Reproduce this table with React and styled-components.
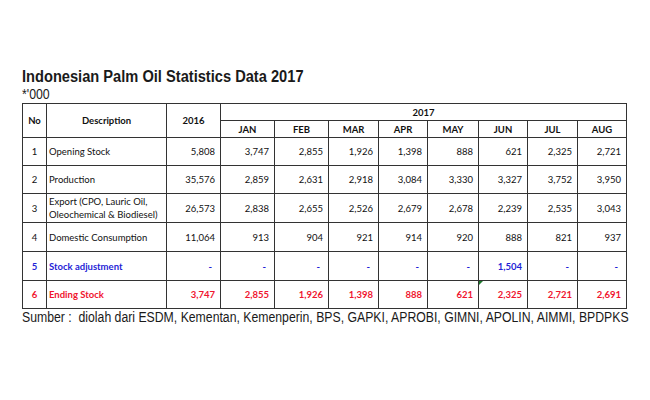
import styled, { createGlobalStyle } from "styled-components";

const months = ["JAN", "FEB", "MAR", "APR", "MAY", "JUN", "JUL", "AUG"];
const widths = [24, 120, 54, 54, 54, 50, 49, 51, 49, 50, 49];

const rows = [
  { no: 1, desc: "Opening Stock", vals: ["5,808", "3,747", "2,855", "1,926", "1,398", "888", "621", "2,325", "2,721"], h: 28 },
  { no: 2, desc: "Production", vals: ["35,576", "2,859", "2,631", "2,918", "3,084", "3,330", "3,327", "3,752", "3,950"], h: 28 },
  { no: 3, desc: "Export (CPO, Lauric Oil,\nOleochemical & Biodiesel)", vals: ["26,573", "2,838", "2,655", "2,526", "2,679", "2,678", "2,239", "2,535", "3,043"], h: 29 },
  { no: 4, desc: "Domestic Consumption", vals: ["11,064", "913", "904", "921", "914", "920", "888", "821", "937"], h: 29 },
  { no: 5, desc: "Stock adjustment", vals: ["-", "-", "-", "-", "-", "-", "1,504", "-", "-"], h: 29, tone: "blue" },
  { no: 6, desc: "Ending Stock", vals: ["3,747", "2,855", "1,926", "1,398", "888", "621", "2,325", "2,721", "2,691"], h: 28, tone: "red" },
];

const tones = { blue: "#1f1fd6", red: "#f0142e" };

const App = () => {
  return (
    <Page>
      <GlobalStyle />
      <Title>Indonesian Palm Oil Statistics Data 2017</Title>
      <Unit>*'000</Unit>
      <Table>
        <colgroup>
          {widths.map((w, i) => (
            <Col key={i} $w={w} />
          ))}
        </colgroup>
        <thead>
          <HeadRow>
            <Th rowSpan={2}>No</Th>
            <Th rowSpan={2}>Description</Th>
            <Th rowSpan={2}>2016</Th>
            <Th colSpan={8}>2017</Th>
          </HeadRow>
          <HeadRow>
            {months.map(m => (
              <Th key={m}>{m}</Th>
            ))}
          </HeadRow>
        </thead>
        <tbody>
          {rows.map(r => (
            <Row key={r.no} $h={r.h} $tone={r.tone}>
              <NoCell>{r.no}</NoCell>
              <DescCell>{r.desc}</DescCell>
              {r.vals.map((v, i) => (
                <NumCell key={i} $dash={v === "-"} $mark={r.no === 6 && i === 6}>
                  {v}
                </NumCell>
              ))}
            </Row>
          ))}
        </tbody>
      </Table>
      <Source>Sumber :  diolah dari ESDM, Kementan, Kemenperin, BPS, GAPKI, APROBI, GIMNI, APOLIN, AIMMI, BPDPKS</Source>
    </Page>
  );
};

export default App;

/* ---------------------------- STYLED COMPONENTS --------------------------- */

const GlobalStyle = createGlobalStyle`
  body {
    margin: 0;
    background: #fff;
  }
`;

const Page = styled.div`
  width: 650px;
  height: 400px;
  padding: 68px 0 0 22px;
  box-sizing: border-box;
  font-family: "Liberation Sans", Arial, sans-serif;
  color: #1a1a1a;
  overflow: hidden;
`;

const Title = styled.div`
  font-size: 16px;
  font-weight: bold;
  line-height: 18px;
  white-space: nowrap;
  transform: scaleX(0.915);
  transform-origin: left center;
`;

const Unit = styled.div`
  font-size: 14px;
  line-height: 17px;
  transform: scaleX(0.88);
  transform-origin: left center;
`;

const Table = styled.table`
  border-collapse: collapse;
  table-layout: fixed;
  width: 604px;
  font-family: Lato, "Open Sans", sans-serif;
  font-size: 9.5px;
  border: 1px solid #222;

  td,
  th {
    border: 1px solid #333;
    padding: 0;
  }
`;

const Col = styled.col`
  width: ${p => p.$w}px;
`;

const HeadRow = styled.tr`
  height: 17px;
`;

const Th = styled.th`
  font-weight: bold;
  text-align: center;
  vertical-align: middle;
  color: #111;
`;

const Row = styled.tr`
  height: ${p => p.$h}px;
  color: ${p => (p.$tone ? tones[p.$tone] : "#111")};
  font-weight: ${p => (p.$tone ? "bold" : "normal")};
`;

const NoCell = styled.td`
  text-align: center;
`;

const DescCell = styled.td`
  text-align: left;
  padding-left: 2px !important;
  white-space: pre-line;
  line-height: 13px;
`;

const NumCell = styled.td`
  position: relative;
  text-align: right;
  padding-right: ${p => (p.$dash ? "8px" : "5px")} !important;

  &::before {
    content: "";
    display: ${p => (p.$mark ? "block" : "none")};
    position: absolute;
    left: 0;
    top: 0;
    border-top: 4px solid #1e7a2e;
    border-right: 4px solid transparent;
  }
`;

const Source = styled.div`
  font-size: 14px;
  line-height: 17px;
  white-space: pre;
  transform: scaleX(0.875);
  transform-origin: left center;
`;
